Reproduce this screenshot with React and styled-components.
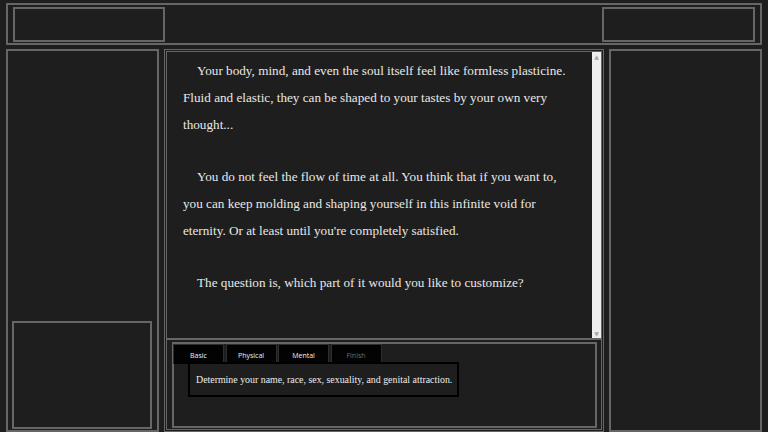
import React from 'react'
import styled, { createGlobalStyle } from 'styled-components'

const GlobalStyle = createGlobalStyle`
  html, body {
    margin: 0;
    padding: 0;
    background: #1e1e1e;
    overflow: hidden;
  }
`;

const Page = styled.div`
  width: 768px;
  height: 432px;
  box-sizing: border-box;
  padding: 3px 6px 0 6px;
  display: flex;
  flex-direction: column;
  gap: 4px;
  background: #1e1e1e;
`;

const TopBar = styled.div`
  height: 42px;
  box-sizing: border-box;
  border: 2px solid #666;
  padding: 2px 5px 1px 5px;
  display: flex;
  justify-content: space-between;
  align-items: stretch;
`;

const Box = styled.div`
  width: ${p => p.w}px;
  height: ${p => p.h ? p.h + 'px' : 'auto'};
  box-sizing: border-box;
  border: 2px solid #666;
`;

const Row = styled.div`
  flex: 1;
  display: flex;
  gap: 5px;
  min-height: 0;
`;

const Side = styled.div`
  width: 153px;
  box-sizing: border-box;
  border: 2px solid #666;
  display: flex;
  flex-direction: column;
  justify-content: flex-end;
  padding: 0 5px 1px 4px;
`;

const Center = styled.div`
  width: 440px;
  box-sizing: border-box;
  border: 3px double #666;
  display: flex;
  flex-direction: column;
`;

const Story = styled.div`
  flex: 1;
  display: flex;
  border-bottom: 2px solid #666;
  min-height: 0;
`;

const StoryText = styled.div`
  flex: 1;
  padding: 5px 16px 0 16px;
  font-family: "Liberation Serif", "Times New Roman", serif;
  font-size: 13.2px;
  line-height: 27px;
  color: #e8e8e8;
`;

const Para = styled.p`
  margin: 0 0 25px 0;
  text-indent: 14px;
`;

const Scroll = styled.div`
  width: 9px;
  background: #efefef;
  display: flex;
  flex-direction: column;
  justify-content: space-between;
  align-items: center;
  font-family: "DejaVu Sans", sans-serif;
  font-size: 6px;
  color: #a8a8a8;
  line-height: 9px;
`;

const Bottom = styled.div`
  height: 89px;
  box-sizing: border-box;
  padding: 2px 4px 1px 5px;
  display: flex;
`;

const Panel = styled.div`
  flex: 1;
  box-sizing: border-box;
  border: 2px solid #666;
`;

const Tabs = styled.div`
  display: flex;
  gap: 1.5px;
  margin-left: -1px;
`;

const Tab = styled.div`
  width: 51px;
  height: 20px;
  box-sizing: border-box;
  background: #030303;
  border: 1px solid #2e2e2e;
  border-bottom: none;
  text-align: center;
  padding-top: 6px;
  font-family: "Open Sans", "Noto Sans", sans-serif;
  font-size: 7px;
  line-height: 9px;
  color: ${p => p.off ? '#6e6e6e' : '#f0f0f0'};
`;

const Info = styled.div`
  width: 271px;
  height: 35px;
  box-sizing: border-box;
  margin: -2px 0 0 14px;
  position: relative;
  background: #1e1e1e;
  border: 2px solid #000;
  padding: 0 6px;
  display: flex;
  align-items: center;
  font-family: "Liberation Serif", "Times New Roman", serif;
  font-size: 9.9px;
  color: #ececec;
  white-space: nowrap;
`;

export default function App() {
  return (
    <>
      <GlobalStyle />
      <Page>
        <TopBar>
          <Box w={152} />
          <Box w={153} />
        </TopBar>
        <Row>
          <Side>
            <Box w={140} h={108} />
          </Side>
          <Center>
            <Story>
              <StoryText>
                <Para>Your body, mind, and even the soul itself feel like formless plasticine. Fluid and elastic, they can be shaped to your tastes by your own very thought...</Para>
                <Para>You do not feel the flow of time at all. You think that if you want to, you can keep molding and shaping yourself in this infinite void for eternity. Or at least until you're completely satisfied.</Para>
                <Para>The question is, which part of it would you like to customize?</Para>
              </StoryText>
              <Scroll>
                <span>▲</span>
                <span>▼</span>
              </Scroll>
            </Story>
            <Bottom>
              <Panel>
                <Tabs>
                  <Tab>Basic</Tab>
                  <Tab>Physical</Tab>
                  <Tab>Mental</Tab>
                  <Tab off>Finish</Tab>
                </Tabs>
                <Info>Determine your name, race, sex, sexuality, and genital attraction.</Info>
              </Panel>
            </Bottom>
          </Center>
          <Side />
        </Row>
      </Page>
    </>
  )
}
